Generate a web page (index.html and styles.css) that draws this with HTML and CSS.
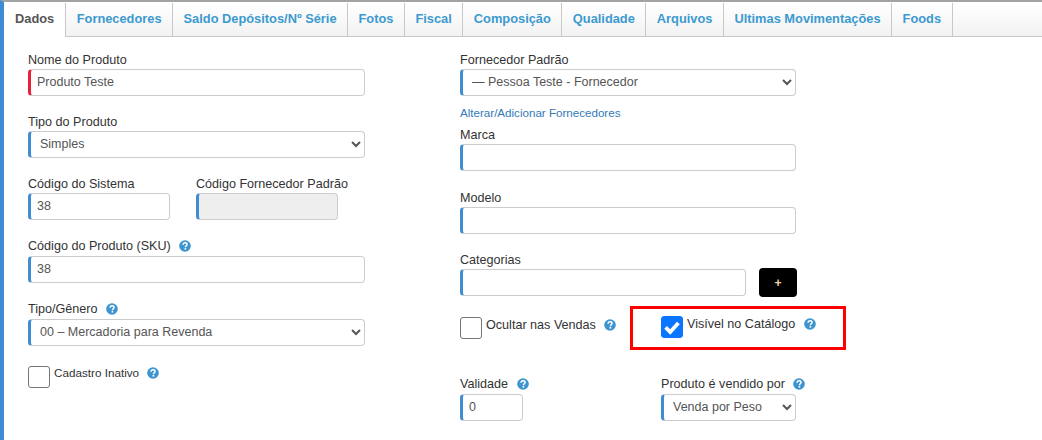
FILE: index.html
```html
<!DOCTYPE html>
<html lang="pt-BR">
<head>
  <meta charset="UTF-8" />
  <title>Produto</title>
  <link rel="stylesheet" href="styles.css">
</head>
<body>

  <svg class="icon-defs" width="0" height="0">
    <symbol id="help" viewBox="0 0 12 12">
      <circle cx="6" cy="6" r="5.8" fill="#3d94cf" />
      <path d="M4.1 4.7c0-1.2.8-1.9 2-1.9s1.9.7 1.9 1.6c0 1.4-1.6 1.4-1.6 2.8" fill="none" stroke="#fff" stroke-width="1.5" />
      <rect x="5.6" y="8" width="1.6" height="1.6" fill="#fff" />
    </symbol>
    <symbol id="check" viewBox="0 0 22 22">
      <path d="M4.6 11.4l4.6 4.6 8.2-9" fill="none" stroke="#fff" stroke-width="3.8" />
    </symbol>
  </svg>

  <div class="page">
    <ul class="tabs">
      <li class="tab active">Dados</li>
      <li class="tab">Fornecedores</li>
      <li class="tab">Saldo Depósitos/Nº Série</li>
      <li class="tab">Fotos</li>
      <li class="tab">Fiscal</li>
      <li class="tab">Composição</li>
      <li class="tab">Qualidade</li>
      <li class="tab">Arquivos</li>
      <li class="tab">Ultimas Movimentações</li>
      <li class="tab">Foods</li>
    </ul>

    <div class="form">
      <!-- coluna esquerda -->
      <div class="col col-left">
        <div class="field">
          <label class="label">Nome do Produto</label>
          <input class="input required" type="text" value="Produto Teste">
        </div>
        <div class="field">
          <label class="label">Tipo do Produto</label>
          <select class="input">
            <option>Simples</option>
          </select>
        </div>
        <div class="field-row">
          <div class="field code-field">
            <label class="label">Código do Sistema</label>
            <input class="input" type="text" value="38">
          </div>
          <div class="field code-field">
            <label class="label">Código Fornecedor Padrão</label>
            <input class="input" type="text" disabled>
          </div>
        </div>
        <div class="field sku-field">
          <label class="label tall">Código do Produto (SKU) <svg class="help"><use href="#help" /></svg></label>
          <input class="input" type="text" value="38">
        </div>
        <div class="field genre-field">
          <label class="label tall">Tipo/Gênero <svg class="help"><use href="#help" /></svg></label>
          <select class="input">
            <option>00 – Mercadoria para Revenda</option>
          </select>
        </div>
        <div class="check-line inactive-line">
          <span class="box"></span>
          <span class="check-text small">Cadastro Inativo <svg class="help"><use href="#help" /></svg></span>
        </div>
      </div>

      <!-- coluna direita -->
      <div class="col col-right">
        <div class="field supplier-field">
          <label class="label">Fornecedor Padrão</label>
          <select class="input">
            <option>— Pessoa Teste - Fornecedor</option>
          </select>
          <a class="link">Alterar/Adicionar Fornecedores</a>
        </div>
        <div class="field brand-field">
          <label class="label">Marca</label>
          <input class="input" type="text">
        </div>
        <div class="field model-field">
          <label class="label">Modelo</label>
          <input class="input" type="text">
        </div>
        <div class="field">
          <label class="label low">Categorias</label>
          <div class="category-line">
            <input class="input" type="text">
            <button class="add-btn">+</button>
          </div>
        </div>
        <div class="flags">
          <div class="check-line hide-line">
            <span class="box"></span>
            <span class="check-text">Ocultar nas Vendas <svg class="help"><use href="#help" /></svg></span>
          </div>
          <div class="check-line catalog-line">
            <span class="box checked"><svg width="22" height="22"><use href="#check" /></svg></span>
            <span class="check-text">Visível no Catálogo <svg class="help"><use href="#help" /></svg></span>
          </div>
        </div>
        <div class="bottom-row">
          <div class="field validity">
            <label class="label tall">Validade <svg class="help"><use href="#help" /></svg></label>
            <input class="input" type="text" value="0">
          </div>
          <div class="field sold-by">
            <label class="label tall">Produto é vendido por <svg class="help"><use href="#help" /></svg></label>
            <select class="input">
              <option>Venda por Peso</option>
            </select>
          </div>
        </div>
      </div>
    </div>
  </div>

</body>
</html>
```

FILE: styles.css
```css
* {
  box-sizing: border-box;
}

html, body {
  height: 100%;
}

body {
  margin: 0;
  overflow: hidden;
  background: #fff;
  font-family: 'Liberation Sans', Arial, sans-serif;
  font-size: 12.6px;
  color: #333;
}

.icon-defs {
  display: block;
  height: 0;
}

.page {
  height: 440px;
  border-left: 4px solid #3f8bd4;
  border-top: 2px solid #a3a3a3;
  padding-top: 1px;
  background: #fff;
}

.tabs {
  display: flex;
  list-style: none;
  margin: 0;
  padding: 0;
  height: 34px;
  border-bottom: 1px solid #c8c8c8;
  background: linear-gradient(#fff, #f2f2f2);
}

.tab {
  padding: 0 10.5px;
  line-height: 32px;
  font-size: 12.83px;
  font-weight: bold;
  color: #3c9ad0;
  border-right: 1px solid #c8c8c8;
  white-space: nowrap;
}

.tab.active {
  height: 34px;
  padding: 0 11px;
  color: #555;
  background: #fff;
}

.form {
  display: flex;
  padding: 14px 0 0 24px;
}

.col-left {
  width: 337px;
  margin-right: 95px;
}

.col-right {
  width: 386px;
}

.col-right > .field {
  width: 336px;
}

.field {
  margin-bottom: 17px;
}

.sku-field {
  margin-top: 18px;
}

.genre-field {
  margin-top: 17px;
}

.label {
  display: block;
  height: 18px;
  line-height: 19px;
  font-size: 12.6px;
  color: #333;
  white-space: nowrap;
}

.label.tall {
  height: 19px;
}

.label.low {
  line-height: 21px;
}

.input {
  display: block;
  width: 100%;
  height: 27px;
  padding: 0 6px 2px;
  font-family: inherit;
  font-size: 12.5px;
  color: #555;
  background: #fff;
  border: 1px solid #ccc;
  border-left: 3px solid #3f8bd4;
  border-radius: 4px;
  outline: none;
}

select.input {
  padding-left: 5px;
}

.input.required {
  border-left-color: #e8213a;
}

.input:disabled {
  background: #eee;
}

.field-row {
  display: flex;
  gap: 26px;
  height: 44px;
}

.code-field {
  width: 142px;
}

.help {
  width: 12px;
  height: 12px;
  margin-left: 5px;
  vertical-align: -2px;
}

.check-line {
  display: flex;
  align-items: flex-start;
}

.box {
  flex: none;
  width: 22px;
  height: 22px;
  border: 1px solid #767676;
  border-radius: 3px;
  background: #fff;
}

.box.checked {
  background: #0a75ff;
  border-color: #0a75ff;
}

.box.checked svg {
  display: block;
  margin: -1px;
}

.check-text {
  margin-left: 4px;
  line-height: 17px;
  white-space: nowrap;
}

.check-text.small {
  font-size: 11.7px;
  line-height: 14px;
}

.inactive-line {
  margin-top: 20px;
}

.supplier-field {
  margin-bottom: 0;
}

.link {
  display: block;
  margin-top: 10px;
  height: 14px;
  line-height: 14px;
  font-size: 11.6px;
  color: #337ab7;
}

.brand-field {
  margin-top: 6px;
}

.model-field {
  margin-top: 18px;
  margin-bottom: 16px;
}

.category-line {
  display: flex;
  align-items: center;
}

.category-line .input {
  flex: none;
  width: 286px;
}

.add-btn {
  flex: none;
  width: 38px;
  height: 29px;
  margin-left: 13px;
  padding: 0;
  font-family: inherit;
  font-size: 12px;
  font-weight: bold;
  color: #f0d9a0;
  background: #000;
  border: 0;
  border-radius: 4px;
}

.flags {
  display: flex;
  height: 44px;
  margin-top: -8px;
  align-items: flex-start;
}

.hide-line {
  width: 170px;
  padding-top: 11px;
}

.catalog-line {
  width: 216px;
  height: 44px;
  padding: 7px 0 0 28px;
  border: 3px solid #f00;
}

.bottom-row {
  display: flex;
  margin-top: 25px;
}

.validity {
  width: 201px;
}

.validity .input {
  width: 63px;
}

.sold-by {
  width: 135px;
}
```
